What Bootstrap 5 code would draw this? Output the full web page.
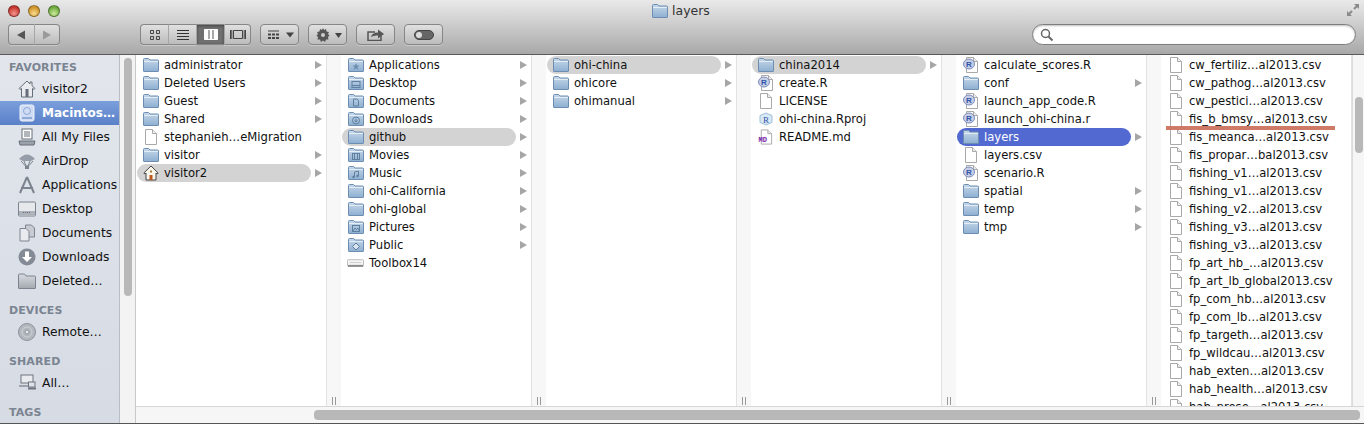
<!DOCTYPE html>
<html>
<head>
  <meta charset="utf-8">
  <title>layers</title>
  <link href="https://cdn.jsdelivr.net/npm/bootstrap@5.3.3/dist/css/bootstrap.min.css" rel="stylesheet">
  <style>
    html, body { height: 424px; overflow: hidden; }
    body { font-family: "DejaVu Sans", sans-serif; font-size: 11.6px; color: #111; background: #fff; }
    .finder { height: 424px; position: relative; border-bottom: 1px solid #555; }

    .topbar { height: 55px; flex: none; background: linear-gradient(#e9e9e9, #d0d0d0 40%, #a8a8a8); border-bottom: 1px solid #5a5a5a; }
    .titlerow { height: 24px; position: relative; }
    .light { width: 12px; height: 12px; border-radius: 50%; border: 1px solid rgba(0,0,0,.35); }
    .light-red { background: radial-gradient(circle at 50% 75%, #f5938c, #c5352e 70%); }
    .light-yellow { background: radial-gradient(circle at 50% 75%, #f8dc8b, #cf942a 70%); }
    .light-green { background: radial-gradient(circle at 50% 75%, #cdeb9a, #6da83f 70%); }
    .lights { padding: 5px 0 0 8px; gap: 8px; }
    .wintitle { position: absolute; left: 652px; top: 2px; font-size: 12.5px; color: #333; line-height: 18px; gap: 4px; }
    .resize { position: absolute; right: 4px; top: 3px; }

    .toolrow { height: 21px; padding-left: 8px; position: relative; }
    .tool { height: 21px; padding: 0; border: 1px solid #868686; border-radius: 4px; background: linear-gradient(#e0e0e0, #bcbcbc); display: flex; align-items: center; justify-content: center; box-shadow: 0 1px 0 rgba(255,255,255,.3); }
    .btn-group > .tool { border-radius: 0; margin-left: 0; border-right: 0; border-left-color: #a6a6a6; }
    .btn-group > .tool:first-child { border-radius: 4px 0 0 4px; border-left-color: #868686; }
    .btn-group > .tool:last-child { border-radius: 0 4px 4px 0; border-right: 1px solid #868686; }
    .tool.on { background: #707070; box-shadow: inset 0 1px 3px rgba(0,0,0,.4); }
    .tool-nav { width: 26px; }
    .tool-view { width: 28px; }
    .tool-view.narrow { width: 27px; }
    .tool-one { width: 39px; margin-left: 9px; }
    .tool-pad { padding-left: 3px; }
    .viewgroup { margin-left: 80px; }
    .searchbox { margin-left: auto; margin-right: 8px; width: 324px; height: 21px; border: 1px solid #7e7e7e; border-radius: 11px; background: #fff; box-shadow: inset 0 1px 2px rgba(0,0,0,.25); padding-left: 7px; }

    .sidebar { width: 120px; flex: none; background: linear-gradient(#e2e6ec, #d6dbe4); border-right: 1px solid #b9bdc4; padding-top: 4px; overflow: hidden; }
    .sidehead { font-weight: bold; font-size: 11px; color: #7b8491; height: 18px; line-height: 18px; padding-left: 9px; letter-spacing: .1px; }
    .sideitem { height: 24px; padding-left: 18px; gap: 6px; font-size: 12.3px; white-space: nowrap; }
    .sideitem.active { background: linear-gradient(#7b9fdc, #5a80c8); color: #fff; font-weight: bold; font-size: 12px; }
    .sidegap { height: 9px; }
    .sidescroll { width: 16px; flex: none; background: #f3f3f3; border-right: 1px solid #c8c8c8; padding: 3px 3px 0 4px; }
    .thumb { background: #b8b8b8; border-radius: 4px; }
    .sidethumb { height: 238px; }

    .colwrap { flex: 1; min-width: 0; overflow: hidden; }
    .fcol { width: 205px; flex: none; display: flex; }
    .fcol-list { width: 191px; flex: none; background: #fff; border-right: 1px solid #e2e2e2; overflow: hidden; padding-top: 1px; }
    .fcol-grip { width: 14px; flex: none; background: #f7f7f7; display: flex; align-items: flex-end; justify-content: center; padding-bottom: 1px; }
    .gripmark { width: 4px; height: 8px; border-left: 1px solid #999; border-right: 1px solid #999; }
    .frow { height: 18px; margin-left: 1px; width: 174px; padding-left: 5px; gap: 5px; white-space: nowrap; position: relative; border-radius: 9px; flex: none; }
    .frow .ficon { flex: none; width: 17px; margin-top: -1px; }
    .frow .fname { padding-top: 2px; }
    .frow.cur { background: #d3d3d3; }
    .frow.sel { background: #5169d0; color: #fff; }
    .frow.hasarrow::after { content: ""; position: absolute; left: 178px; top: 5px; border-left: 7px solid #a6a6a6; border-top: 4px solid transparent; border-bottom: 4px solid transparent; }
    .vscroll { width: 12px; flex: none; background: #f6f6f6; border-left: 1px solid #dcdcdc; padding: 42px 1px 0 2px; }
    .vthumb { height: 56px; }
    .hscroll { height: 17px; flex: none; background: #f6f6f6; border-top: 1px solid #d6d6d6; padding: 3px 4px 0 178px; }
    .hthumb { height: 10px; }
    .redmark { position: absolute; left: 1166px; top: 126px; width: 169px; height: 4px; background: #cf7a66; }
  </style>
</head>
<body>
  <svg width="0" height="0" class="position-absolute">
    <defs>
      <linearGradient id="fb" x1="0" y1="0" x2="0" y2="1"><stop offset="0" stop-color="#c7d8ea"/><stop offset="1" stop-color="#8dafd1"/></linearGradient>
      <linearGradient id="fg" x1="0" y1="0" x2="0" y2="1"><stop offset="0" stop-color="#d9dce1"/><stop offset="1" stop-color="#a3a8b0"/></linearGradient>
      <symbol id="folder" viewBox="0 0 16 14"><path d="M.5 3V1.500q0-1 1-1h4l1.500 1.500h7.500q1 0 1 1V13q0 .5-.5.5H1q-.5 0-.5-.5z" fill="url(#fb)" stroke="#6d8eb0"/><path d="M1 3.500h14" stroke="#e3edf6"/></symbol>
      <symbol id="f-app" viewBox="0 0 16 14"><use href="#folder"/><path d="M8 5l1 2.500h2.500L9.500 9l1 3L8 10.200 5.500 12l1-3-2-1.500H7z" fill="#6d8eb0"/></symbol>
      <symbol id="f-desk" viewBox="0 0 16 14"><use href="#folder"/><rect x="4" y="5.500" width="8" height="6" fill="none" stroke="#5f7f9f"/><path d="M4 9.500h8" stroke="#5f7f9f"/></symbol>
      <symbol id="f-docs" viewBox="0 0 16 14"><use href="#folder"/><path d="M5.500 5h3.500l1.500 1.500v5.500h-5z" fill="none" stroke="#5f7f9f"/></symbol>
      <symbol id="f-down" viewBox="0 0 16 14"><use href="#folder"/><circle cx="8" cy="8.500" r="3.500" fill="none" stroke="#5f7f9f"/><path d="M8 6.500v3.500M6.500 8.500L8 10l1.500-1.500" fill="none" stroke="#5f7f9f"/></symbol>
      <symbol id="f-film" viewBox="0 0 16 14"><use href="#folder"/><rect x="4.500" y="5.500" width="7" height="6" fill="none" stroke="#5f7f9f"/><path d="M6.500 6v5M9.500 6v5" stroke="#5f7f9f"/></symbol>
      <symbol id="f-music" viewBox="0 0 16 14"><use href="#folder"/><path d="M6.500 11V6l4-1v5" fill="none" stroke="#5f7f9f"/><circle cx="5.500" cy="11" r="1.200" fill="#5f7f9f"/><circle cx="9.500" cy="10" r="1.200" fill="#5f7f9f"/></symbol>
      <symbol id="f-pic" viewBox="0 0 16 14"><use href="#folder"/><rect x="4.500" y="5.500" width="7" height="6" fill="none" stroke="#5f7f9f"/><path d="M5 11l2-3 1.500 1.500L10 8l1.500 3" fill="none" stroke="#5f7f9f"/></symbol>
      <symbol id="f-pub" viewBox="0 0 16 14"><use href="#folder"/><path d="M8 5l3.500 3.500L8 12 4.500 8.500z" fill="#dbe6f1" stroke="#5f7f9f"/></symbol>
      <symbol id="doc" viewBox="0 0 14 16"><path d="M1.500.5h7l4 4v11h-11z" fill="#fff" stroke="#a9a9a9"/><path d="M8.500.5v4h4" fill="#eee" stroke="#a9a9a9"/></symbol>
      <symbol id="rdoc" viewBox="0 0 16 16"><path d="M3.500.5h7l4 4v11h-11z" fill="#fff" stroke="#a9a9a9"/><path d="M10.500.5v4h4" fill="#eee" stroke="#a9a9a9"/><ellipse cx="6" cy="7" rx="5.500" ry="5" fill="#c6cfe6" stroke="#7d8cb8"/><text x="6" y="10" font-size="8" font-weight="bold" text-anchor="middle" fill="#2f55a8" font-family="Liberation Sans">R</text></symbol>
      <symbol id="mddoc" viewBox="0 0 18 16"><path d="M4.500.5h7l4 4v11h-11z" fill="#fff" stroke="#a9a9a9"/><path d="M11.500.5v4h4" fill="#eee" stroke="#a9a9a9"/><text x="6" y="13" font-size="7.500" font-weight="bold" text-anchor="middle" fill="#7a1ea8" font-family="Liberation Mono">MD</text></symbol>
      <symbol id="rproj" viewBox="0 0 16 16"><path d="M8 2l6 2.500v7L8 14l-6-2.500v-7z" fill="#d8e8f4" stroke="#9fc0da"/><text x="8" y="12" font-size="9" text-anchor="middle" fill="#2f55a8" font-family="Liberation Serif">R</text></symbol>
      <symbol id="home" viewBox="0 0 16 16"><path d="M8 1L.8 8l1 1L3 8v7h10V8l1.200 1 1-1z" fill="#fbf6ec" stroke="#444"/><rect x="6.500" y="10" width="3" height="5" fill="#c0581c"/><rect x="7" y="5.500" width="2" height="2" fill="#a67c3a"/></symbol>
      <symbol id="disk" viewBox="0 0 18 10"><rect x=".5" y="1.500" width="17" height="7" rx="1" fill="#f4f4f4" stroke="#bbb"/><rect x="1" y="7" width="16" height="2" fill="#8a8a8a"/><path d="M3 4.500h12" stroke="#ccc"/></symbol>
      <symbol id="s-house" viewBox="0 0 18 18"><path d="M9 1L1 8.500l1 1L3.500 8.400V17h11V8.400L16 9.500l1-1L14 5.700V2h-2v2z" fill="#e9ebee" stroke="#666e79"/><rect x="7.500" y="9" width="3" height="8" fill="#666e79"/></symbol>
      <symbol id="s-hd" viewBox="0 0 18 18"><rect x="2" y="1" width="14" height="16" rx="2" fill="#cfdcf3" stroke="#eef3fb"/><circle cx="9" cy="7" r="3.500" fill="none" stroke="#8fa9d8"/><rect x="4" y="13" width="10" height="2" fill="#8fa9d8"/></symbol>
      <symbol id="s-all" viewBox="0 0 18 18"><rect x="4" y="1" width="10" height="10" fill="#fff" stroke="#666e79"/><path d="M6 4h6M6 6h6M6 8h6" stroke="#666e79"/><path d="M1 13h16l-1 4H2z" fill="#9ba2ac" stroke="#666e79"/></symbol>
      <symbol id="s-air" viewBox="0 0 18 18"><path d="M1 7q8-9 16 0l-4 2H5z" fill="#969da8"/><path d="M3 9l4.500 5h3L15 9M6 9l2 5M12 9l-2 5" fill="none" stroke="#7d848f"/><rect x="7" y="14" width="4" height="3" fill="#7d848f"/></symbol>
      <symbol id="s-app" viewBox="0 0 18 18"><path d="M9 1L2 17M9 1l7 16M3 12h12" fill="none" stroke="#7d848f" stroke-width="2"/></symbol>
      <symbol id="s-desk" viewBox="0 0 18 18"><rect x=".5" y="2" width="17" height="14" rx="1" fill="#e6e8eb" stroke="#7d848f"/><rect x="1" y="11" width="16" height="4" fill="#aeb3bb"/><path d="M5 12.500h8" stroke="#666e79" stroke-dasharray="1 1"/></symbol>
      <symbol id="s-docs" viewBox="0 0 18 18"><path d="M7.500 1h6l3 3v9h-9z" fill="#c8ccd2" stroke="#7d848f"/><path d="M2 4.500h6l3 3V17H2z" fill="#e9ebee" stroke="#7d848f"/></symbol>
      <symbol id="s-down" viewBox="0 0 18 18"><circle cx="9" cy="9" r="8.500" fill="#848b96"/><path d="M7 3.500h4V9h3l-5 5-5-5h3z" fill="#fff"/></symbol>
      <symbol id="s-folder" viewBox="0 0 18 16"><path d="M.5 4V2q0-1 1-1h5L8 3h8.500q1 0 1 1v11q0 .5-.5.500H1q-.5 0-.5-.5z" fill="url(#fg)" stroke="#7d848f"/></symbol>
      <symbol id="s-disc" viewBox="0 0 18 18"><circle cx="9" cy="9" r="8.500" fill="#b3b7be" stroke="#8d929b"/><circle cx="9" cy="9" r="5" fill="none" stroke="#cfd2d7"/><circle cx="9" cy="9" r="2" fill="#e8e9ec" stroke="#8d929b"/></symbol>
      <symbol id="s-net" viewBox="0 0 18 18"><rect x="3" y="1" width="12" height="8" fill="#e9ebee" stroke="#6e7580"/><path d="M1 11h9v2H1z" fill="#9ba2ac"/><rect x="10.500" y="8" width="6.500" height="5" fill="#dfe2e6" stroke="#6e7580"/><path d="M10 14.500h8" stroke="#6e7580" stroke-width="2"/></symbol>
    </defs>
  </svg>

  <div class="finder d-flex flex-column">
    <div class="topbar">
      <div class="titlerow">
        <div class="lights d-flex">
          <span class="light light-red"></span>
          <span class="light light-yellow"></span>
          <span class="light light-green"></span>
        </div>
        <div class="wintitle d-flex align-items-center">
          <svg width="16" height="14"><use href="#folder"/></svg>
          <span>layers</span>
        </div>
        <svg class="resize" width="14" height="14" viewBox="0 0 14 14"><path d="M8 1h5v5l-1.800-1.800-2.500 2.500-1.400-1.400 2.500-2.500zM6 13H1V8l1.800 1.800 2.500-2.500 1.400 1.400-2.500 2.500z" fill="#8a8a8a"/></svg>
      </div>
      <div class="toolrow d-flex align-items-center">
        <div class="btn-group">
          <button class="tool tool-nav"><svg width="10" height="10"><path d="M0 5l8-4.500v9z" fill="#555"/></svg></button>
          <button class="tool tool-nav"><svg width="10" height="10"><path d="M9 5L1 .5v9z" fill="#999"/></svg></button>
        </div>
        <div class="btn-group viewgroup">
          <button class="tool tool-view"><svg width="12" height="12"><path d="M1.500 1.500h3v3h-3zM7.500 1.500h3v3h-3zM1.500 7.500h3v3h-3zM7.500 7.500h3v3h-3z" fill="none" stroke="#444"/></svg></button>
          <button class="tool tool-view"><svg width="12" height="12"><path d="M0 1.500h12M0 4.500h12M0 7.500h12M0 10.500h12" stroke="#333"/></svg></button>
          <button class="tool tool-view on"><svg width="14" height="11"><path d="M.5.500h13v10H.5z" fill="#fff" stroke="#fff"/><path d="M5 1v9M9 1v9" stroke="#555"/></svg></button>
          <button class="tool tool-view narrow"><svg width="16" height="11"><path d="M3.500 1.500h9v8h-9zM.5 1v9M1.800 1v9M14.200 1v9M15.500 1v9" fill="none" stroke="#444"/></svg></button>
        </div>
        <button class="tool tool-one tool-pad"><svg width="26" height="10"><path d="M0 1h11" stroke="#444"/><path d="M0 4.500h11M0 8h11" stroke="#444" stroke-width="2" stroke-dasharray="3 1"/><path d="M18 2.500h8l-4 5z" fill="#444"/></svg></button>
        <button class="tool tool-one tool-pad"><svg width="26" height="14"><path d="M7 0l1 2 2-1 .5 2.500L13 4l-1 2 1.500 1.500L12 9l.5 2.500-2.500 0L9 14l-2-1.500L5 14l-1-2.500-2.500 0L2 9 .5 7.500 2 6 1 4l2.500-.5L4 1l2 1z" fill="#555"/><circle cx="7" cy="7" r="2" fill="#ccc"/><path d="M19 5h7l-3.500 5z" fill="#444"/></svg></button>
        <button class="tool tool-one"><svg width="18" height="13"><path d="M8 4H1v8.500h13V8" fill="none" stroke="#555" stroke-width="1.500"/><path d="M4 9q1-4.500 7-4.500V1.500l6 4.500-6 4.500V7.500q-4-.5-7 1.500z" fill="#555"/></svg></button>
        <button class="tool tool-one"><svg width="20" height="10"><rect x=".5" y=".5" width="19" height="9" rx="4.500" fill="#666" stroke="#444"/><circle cx="5" cy="5" r="3" fill="#ddd"/></svg></button>
        <div class="searchbox d-flex align-items-center">
          <svg width="14" height="14" viewBox="0 0 14 14"><circle cx="5.500" cy="5.500" r="4" fill="none" stroke="#666" stroke-width="1.500"/><path d="M8.500 8.500l4 4" stroke="#666" stroke-width="2"/></svg>
        </div>
      </div>
    </div>

    <div class="d-flex flex-grow-1 overflow-hidden">
      <div class="sidebar" id="sidebar"></div>
      <div class="sidescroll"><div class="thumb sidethumb"></div></div>
      <div class="colwrap d-flex flex-column">
        <div class="d-flex flex-grow-1 overflow-hidden">
          <div class="d-flex flex-grow-1 overflow-hidden" id="columns"></div>
          <div class="vscroll"><div class="thumb vthumb"></div></div>
        </div>
        <div class="hscroll"><div class="thumb hthumb"></div></div>
      </div>
    </div>
    <div class="redmark"></div>
  </div>

  <script>
    const sideData = [
      ['h', 'FAVORITES'],
      ['s-house', 'visitor2'], ['s-hd', 'Macintos…', 'active'], ['s-all', 'All My Files'], ['s-air', 'AirDrop'],
      ['s-app', 'Applications'], ['s-desk', 'Desktop'], ['s-docs', 'Documents'], ['s-down', 'Downloads'], ['s-folder', 'Deleted…'],
      ['g'], ['h', 'DEVICES'], ['s-disc', 'Remote…'],
      ['g'], ['h', 'SHARED'], ['s-net', 'All…'],
      ['g'], ['h', 'TAGS']
    ];
    const F = 'folder', D = 'doc', R = 'rdoc';
    const columns = [
      [[F,'administrator',1],[F,'Deleted Users',1],[F,'Guest',1],[F,'Shared',1],[D,'stephanieh…eMigration'],[F,'visitor',1],['home','visitor2',1,'cur']],
      [['f-app','Applications',1],['f-desk','Desktop',1],['f-docs','Documents',1],['f-down','Downloads',1],[F,'github',1,'cur'],['f-film','Movies',1],['f-music','Music',1],[F,'ohi-California',1],[F,'ohi-global',1],['f-pic','Pictures',1],['f-pub','Public',1],['disk','Toolbox14']],
      [[F,'ohi-china',1,'cur'],[F,'ohicore',1],[F,'ohimanual',1]],
      [[F,'china2014',1,'cur'],[R,'create.R'],[D,'LICENSE'],['rproj','ohi-china.Rproj'],['mddoc','README.md']],
      [[R,'calculate_scores.R'],[F,'conf',1],[R,'launch_app_code.R'],[R,'launch_ohi-china.r'],[F,'layers',1,'sel'],[D,'layers.csv'],[R,'scenario.R'],[F,'spatial',1],[F,'temp',1],[F,'tmp',1]],
      ['cw_fertiliz…al2013.csv','cw_pathog…al2013.csv','cw_pestici…al2013.csv','fis_b_bmsy…al2013.csv','fis_meanca…al2013.csv','fis_propar…bal2013.csv','fishing_v1…al2013.csv','fishing_v1…al2013.csv','fishing_v2…al2013.csv','fishing_v3…al2013.csv','fishing_v3…al2013.csv','fp_art_hb_…al2013.csv','fp_art_lb_global2013.csv','fp_com_hb…al2013.csv','fp_com_lb…al2013.csv','fp_targeth…al2013.csv','fp_wildcau…al2013.csv','hab_exten…al2013.csv','hab_health…al2013.csv','hab_prese…al2013.csv'].map(n => [D, n])
    ];

    const sizes = { doc: [14,16], rdoc: [16,16], mddoc: [18,16], rproj: [16,16], home: [16,16], disk: [18,10] };

    document.getElementById('sidebar').innerHTML = sideData.map(s => {
      if (s[0] === 'h') return '<div class="sidehead">' + s[1] + '</div>';
      if (s[0] === 'g') return '<div class="sidegap"></div>';
      return '<div class="sideitem d-flex align-items-center ' + (s[2] || '') + '"><svg width="18" height="18"><use href="#' + s[0] + '"/></svg><span>' + s[1] + '</span></div>';
    }).join('');

    document.getElementById('columns').innerHTML = columns.map(col => {
      const rows = col.map(r => {
        const sz = sizes[r[0]] || [16,14];
        return '<div class="frow d-flex align-items-center ' + (r[2] ? 'hasarrow ' : '') + (r[3] || '') + '">' +
          '<span class="d-flex justify-content-center ficon"><svg width="' + sz[0] + '" height="' + sz[1] + '"><use href="#' + r[0] + '"/></svg></span><span class="fname">' + r[1] + '</span></div>';
      }).join('');
      return '<div class="fcol"><div class="fcol-list">' + rows + '</div><div class="fcol-grip"><span class="gripmark"></span></div></div>';
    }).join('');
  </script>
</body>
</html>
